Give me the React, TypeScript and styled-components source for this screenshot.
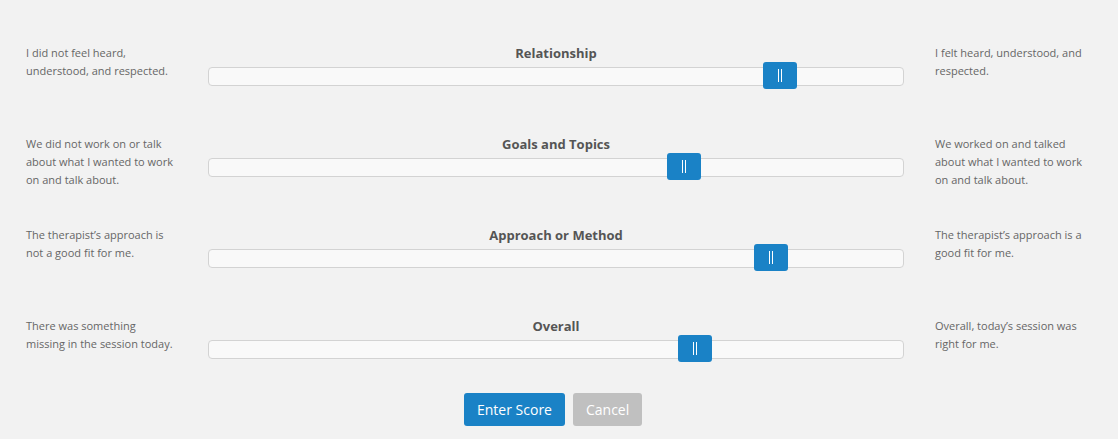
import React from "react";
import styled, { createGlobalStyle } from "styled-components";

const Global = createGlobalStyle`
  html, body { margin: 0; padding: 0; background: #f2f2f2; }
  body { font-family: "Open Sans", "Liberation Sans", sans-serif; }
`;

const Page = styled.div`
  padding: 44px 0 0 26px;
  width: 1118px;
  box-sizing: border-box;
`;

const Rows = styled.div`
  display: flex;
  flex-direction: column;
  gap: 37px;
`;

const Row = styled.div`
  display: grid;
  grid-template-columns: 182px 696px 1fr;
  height: 54px;
  align-items: start;
`;

const SideText = styled.div<{ $side: "left" | "right" }>`
  font-size: 11px;
  line-height: 18px;
  color: #666;
  width: 150px;
  margin-left: ${(p) => (p.$side === "right" ? "31px" : "0")};
`;

const Middle = styled.div`
  display: flex;
  flex-direction: column;
`;

const Title = styled.div`
  font-size: 13px;
  font-weight: 700;
  line-height: 18px;
  color: #555;
  text-align: center;
`;

const Track = styled.div`
  position: relative;
  margin-top: 5px;
  height: 17px;
  background: #f9f9f9;
  border: 1px solid #d3d3d3;
  border-radius: 4px;
`;

const Handle = styled.div`
  position: absolute;
  top: -6px;
  width: 34px;
  height: 27px;
  background: #1a82c6;
  border-radius: 3px;
  display: flex;
  align-items: center;
  justify-content: center;
  gap: 2px;
  &::before, &::after {
    content: "";
    width: 1px;
    height: 13px;
    background: #fff;
  }
`;

const Buttons = styled.div`
  display: flex;
  gap: 8px;
  margin-top: 22px;
  margin-left: 438px;
`;

const Button = styled.button<{ $variant: "primary" | "muted" }>`
  font-family: "Open Sans", "Liberation Sans", sans-serif;
  font-size: 14px;
  height: 33px;
  padding: 0 13px;
  border: none;
  border-radius: 3px;
  color: #fff;
  background: ${(p) => (p.$variant === "primary" ? "#1a82c6" : "#c0c0c0")};
  cursor: pointer;
`;

const rows = [
  {
    title: "Relationship",
    left: "I did not feel heard, understood, and respected.",
    right: "I felt heard, understood, and respected.",
    pos: 554,
  },
  {
    title: "Goals and Topics",
    left: "We did not work on or talk about what I wanted to work on and talk about.",
    right: "We worked on and talked about what I wanted to work on and talk about.",
    pos: 458,
  },
  {
    title: "Approach or Method",
    left: "The therapist\u2019s approach is not a good fit for me.",
    right: "The therapist\u2019s approach is a good fit for me.",
    pos: 545,
  },
  {
    title: "Overall",
    left: "There was something missing in the session today.",
    right: "Overall, today\u2019s session was right for me.",
    pos: 469,
  },
];

export default function App() {
  return (
    <Page>
      <Global />
      <Rows>
        {rows.map((r) => (
          <Row key={r.title}>
            <SideText $side="left">{r.left}</SideText>
            <Middle>
              <Title>{r.title}</Title>
              <Track>
                <Handle style={{ left: r.pos }} />
              </Track>
            </Middle>
            <SideText $side="right">{r.right}</SideText>
          </Row>
        ))}
      </Rows>
      <Buttons>
        <Button $variant="primary">Enter Score</Button>
        <Button $variant="muted">Cancel</Button>
      </Buttons>
    </Page>
  );
}
